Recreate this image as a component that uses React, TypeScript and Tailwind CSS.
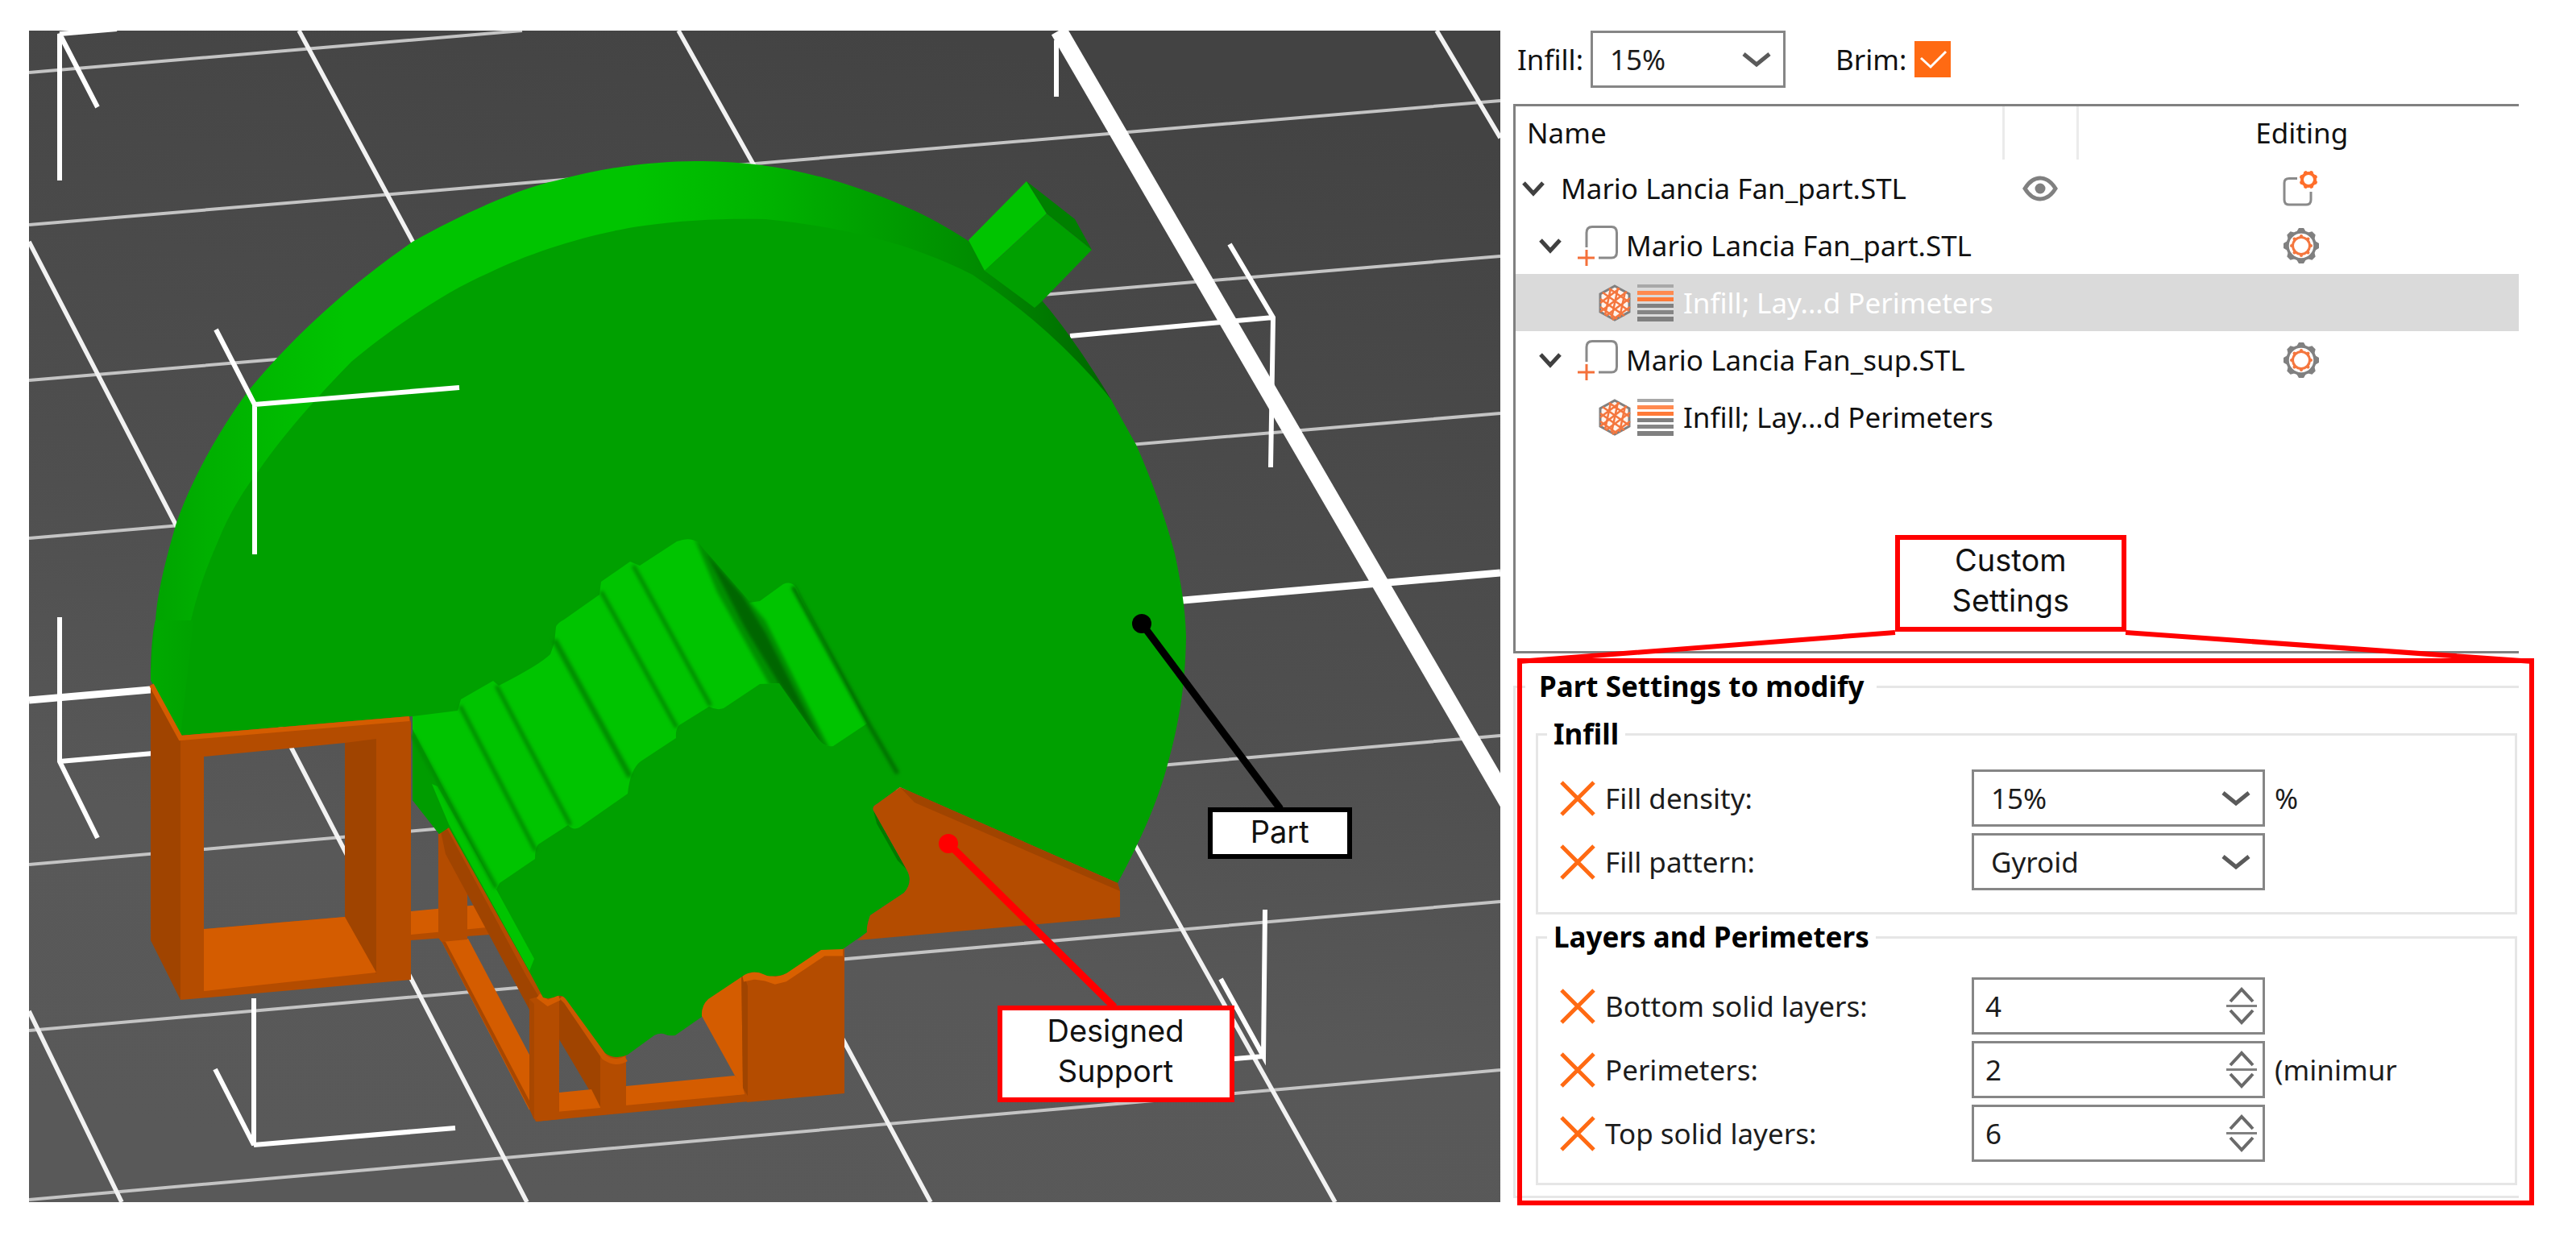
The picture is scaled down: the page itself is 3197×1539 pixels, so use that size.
import React, { useState } from "react";

const UI = "font-['Noto_Sans','Open_Sans',sans-serif]";
const NOTE = "font-[Inter,'Liberation_Sans',sans-serif]";

function Chevron({ className }: { className: string }) {
  return (
    <svg viewBox="0 0 36 20" fill="none" className={className} aria-hidden="true">
      <path d="M2 3 L18 16 L34 3" stroke="currentColor" strokeWidth="5" />
    </svg>
  );
}

function TreeChevron() {
  return (
    <svg viewBox="0 0 28 20" fill="none" className="h-5 w-7 shrink-0" aria-hidden="true">
      <path d="M2 3 L14 16 L26 3" stroke="#404040" strokeWidth="5" />
    </svg>
  );
}

function AddPartIcon() {
  return (
    <svg viewBox="0 0 50 50" fill="none" className="h-[50px] w-[50px] shrink-0" aria-hidden="true">
      <path d="M11 27 V9 Q11 1.500 18 1.500 H42 Q48.500 1.500 48.500 9 V33 Q48.500 40 42 40 H26" stroke="#8a8a8a" strokeWidth="3" />
      <path d="M0 40 H21 M11 30 V50" stroke="#f4703a" strokeWidth="3" />
    </svg>
  );
}

function InfillIcon() {
  return (
    <svg viewBox="0 0 42 46" fill="none" className="h-[46px] w-[42px] shrink-0" aria-hidden="true">
      <path d="M21 2 L39 12 V34 L21 44 L3 34 V12 Z" fill="#fff3ec" stroke="#808080" strokeWidth="3" />
      <path
        d="M14 5 L39 22 M6 10 L39 33 M3 18 L33 39 M3 28 L24 43 M27 5 L3 23 M36 9 L3 34 M40 17 L10 39 M40 28 L18 44 M16 5 L9 38 M25 4 L17 42 M34 9 L27 41"
        stroke="#f4763e"
        strokeWidth="2.500"
      />
    </svg>
  );
}

function LayersIcon() {
  return (
    <svg viewBox="0 0 45 46" className="h-[46px] w-[45px] shrink-0" aria-hidden="true">
      <rect y="0" width="45" height="4" fill="#a8a8a8" />
      <rect y="8" width="45" height="5" fill="#ff8a50" />
      <rect y="16" width="45" height="5" fill="#ff7a38" />
      <rect y="24" width="45" height="5" fill="#808080" />
      <rect y="32" width="45" height="5" fill="#858585" />
      <rect y="40" width="45" height="6" fill="#808080" />
    </svg>
  );
}

function EyeIcon() {
  return (
    <svg viewBox="0 0 44 32" fill="none" className="h-8 w-11" aria-hidden="true">
      <path d="M3 16 Q11 3 22 3 Q33 3 41 16 Q33 29 22 29 Q11 29 3 16 Z" stroke="#808080" strokeWidth="5" />
      <circle cx="22" cy="16" r="6.500" fill="#808080" />
    </svg>
  );
}

const TEETH = [0, 45, 90, 135, 180, 225, 270, 315];

function GearIcon() {
  return (
    <svg viewBox="-23 -23 46 46" fill="none" className="h-[46px] w-[46px]" aria-hidden="true">
      <circle r="17" stroke="#808080" strokeWidth="3.500" />
      {TEETH.map((a) => (
        <path key={a} d="M-6 -17 L-3 -22 H3 L6 -17 Z" fill="#808080" transform={`rotate(${a})`} />
      ))}
      <circle r="10.500" stroke="#f4763e" strokeWidth="3" />
      {TEETH.map((a) => (
        <circle key={a} cy="-12" r="2" fill="#f4763e" transform={`rotate(${a})`} />
      ))}
    </svg>
  );
}

function ObjectSettingsIcon() {
  return (
    <svg viewBox="0 0 46 46" fill="none" className="h-[46px] w-[46px]" aria-hidden="true">
      <path d="M18 10.500 H8 Q2 10.500 2 16 V37 Q2 43 8 43 H29 Q35 43 35 37 V27" stroke="#8a8a8a" strokeWidth="3" />
      <g transform="translate(32 12)">
        <circle r="8" stroke="#ff6e2a" strokeWidth="4" />
        {TEETH.map((a) => (
          <circle key={a} cy="-9" r="2.500" fill="#ff6e2a" transform={`rotate(${a + 22})`} />
        ))}
      </g>
    </svg>
  );
}

function Scene() {
  return (
    <svg viewBox="36 38 1826 1454" className="block h-full w-full" role="img" aria-label="Fan part and designed support on the print bed">
      <defs>
        <linearGradient id="bed" x1="0.600" y1="0" x2="0.350" y2="1">
          <stop offset="0" stopColor="#434343" />
          <stop offset="0.500" stopColor="#4f4f4f" />
          <stop offset="0.750" stopColor="#585858" />
          <stop offset="1" stopColor="#595959" />
        </linearGradient>
        <linearGradient id="rim" gradientUnits="userSpaceOnUse" x1="187" y1="0" x2="1390" y2="0">
          <stop offset="0" stopColor="#00a300" />
          <stop offset="0.060" stopColor="#00b000" />
          <stop offset="0.200" stopColor="#00c400" />
          <stop offset="0.500" stopColor="#00c400" />
          <stop offset="0.640" stopColor="#00b200" />
          <stop offset="0.760" stopColor="#009c00" />
          <stop offset="0.860" stopColor="#008a00" />
          <stop offset="1" stopColor="#006400" />
        </linearGradient>
        <linearGradient id="leftEdge" gradientUnits="userSpaceOnUse" x1="187" y1="0" x2="250" y2="0">
          <stop offset="0" stopColor="#00aa00" />
          <stop offset="1" stopColor="#00a000" />
        </linearGradient>
        <filter id="soft" x="-20%" y="-20%" width="140%" height="140%">
          <feGaussianBlur stdDeviation="2" />
        </filter>
        <clipPath id="blade">
          <path d="M848 670 Q858 667 866 673 L930 746 L972 725 Q986 719 992 738 L1076 898 L1034 926 Q1024 928 1016 918 L967 848 L943 849 L898 879 Z" />
        </clipPath>
      </defs>
      <rect x="36" y="38" width="1826" height="1454" fill="url(#bed)" />

      {/* bed grid */}
      <g stroke="#c4c4c4" strokeWidth="4">
        <path d="M36 90 L648 38 M36 279 L1862 125 M36 472 L1862 318 M36 668 L1862 513 M36 1073 L1862 913 M36 1279 L1862 1119 M36 1489 L1862 1328" />
      </g>
      <g stroke="#f2f2f2" strokeWidth="5.500">
        <path d="M36 1255 L151 1492 M36 300 L654 1492 M371 38 L1155 1492 M842 38 L1657 1492 M1783 38 L1862 171" />
      </g>
      <path d="M36 869 L1862 711" stroke="#fff" strokeWidth="9" />
      <path d="M1314 38 L1874 1001" stroke="#fff" strokeWidth="21" />

      {/* rear bounding-box corners */}
      <g stroke="#fff" strokeWidth="6" fill="none">
        <path d="M74 224 V42 L121 133 M74 42 L145 36" />
        <path d="M1311 50 V120" />
        <path d="M1526 303 L1580 394 L1577 580 M1580 394 L1328 417" />
        <path d="M74 766 V945 L121 1040 M74 945 L190 935" />
        <path d="M315 1239 V1421 L267 1327 M315 1421 L565 1400" />
        <path d="M1570 1129 L1568 1311 L1515 1215 M1568 1311 L1520 1315" />
      </g>

      {/* middle support frame */}
      <path d="M510 1131 L594 1123 L610 1152 L510 1162 Z" fill="#d45c00" />
      <path d="M510 1160 L605 1151 L608 1160 L510 1167 Z" fill="#b44c00" />
      <path d="M548 1168 L581 1165 L657 1309 L657 1378 Z" fill="#d45c00" />
      <path d="M547 1166 L553 1169 L658 1368 L657 1376 Z" fill="#a84700" />
      <path d="M544 1018 L580 1070 V1166 L548 1169 L544 1164 Z" fill="#b44c00" />
      <path d="M544 1018 L557 1020 L665 1200 L690 1238 L657 1253 L580 1110 L553 1060 Z" fill="#a04400" />
      <path d="M547 1020 L558 1028 L656 1210 L674 1240" stroke="#b44c00" strokeWidth="6" fill="none" />
      <path d="M694 1230 L703 1241 L760 1310 L745 1376 L694 1290 Z" fill="#a04400" />
      <path d="M694 1356 L734 1352 L746 1376 L694 1381 Z" fill="#d45c00" />
      <path d="M777 1348 L912 1335 L930 1358 L777 1374 Z" fill="#d45c00" />
      <path d="M690 1380 L927 1358 L950 1365 L665 1392 Z" fill="#b44c00" />
      <path d="M657 1240 L694 1230 V1389 L665 1392 L657 1376 Z" fill="#b44c00" />
      <path d="M657 1240 L663 1246 V1390 L657 1376 Z" fill="#a84700" />
      <path d="M668 1236 L680 1245 L694 1238" stroke="#d45c00" strokeWidth="7" fill="none" />
      <path d="M745 1306 H777 V1380 L745 1384 Z" fill="#b44c00" />
      <path d="M697 1237 L703 1243 L750 1312 Q764 1322 777 1314" stroke="#cc5800" strokeWidth="7" fill="none" />
      <path d="M871 1240 L924 1200 V1353 L912 1335 L871 1261 Z" fill="#d45c00" />
      <path d="M920 1200 L1048 1170 V1357 L927 1368 L922 1350 Z" fill="#b44c00" />
      <path d="M920 1200 L928 1224 V1360 L922 1350 Z" fill="#a04400" />
      <path d="M922 1214 L936 1211 L950 1213 L962 1217 L974 1214 L1022 1182 L1046 1182" stroke="#d96000" strokeWidth="9" fill="none" />

      {/* disc rim */}
      <path
        d="M187 844 C187 800 191 775 193 770 C195 735 207 690 218 652 C233 606 267 540 309 484 C370 410 440 350 512 300 C580 262 650 232 691 224 C750 207 820 199 872 200 C960 201 1040 219 1134 261 C1200 292 1260 338 1294 374 C1318 402 1350 447 1379 496 L1330 560 H700 L300 900 L224 913 Z"
        fill="url(#rim)"
      />
      {/* disc face */}
      <path
        d="M224 913 C228 860 232 815 237 770 C245 735 256 705 270 673 C285 635 305 605 321 584 C350 542 391 495 436 449 C480 412 550 363 606 339 C660 312 740 288 800 280 C850 273 900 271 950 272 C1000 277 1040 284 1085 295 C1130 307 1170 322 1207 341 C1250 370 1285 398 1310 422 C1335 445 1360 472 1379 496 C1391 518 1400 534 1410 552 C1425 585 1446 640 1458 687 C1466 725 1471 755 1472 790 C1471 850 1464 895 1449 949 C1438 990 1420 1035 1387 1096 L1117 977 L1088 998 Q1082 1001 1084 1006 L1125 1079 Q1134 1094 1122 1108 L1080 1136 Q1075 1150 1076 1157 L1046 1178 L1019 1179 L976 1208 Q966 1213 952 1211 L942 1207 Q932 1205 924 1210 L879 1240 Q870 1248 871 1262 L838 1285 Q830 1286 826 1284 Q820 1281 812 1285 L779 1309 Q764 1316 751 1307 L703 1241 Q699 1235 692 1236 Q682 1241 674 1238 L657 1206 L557 1027 L545 1035 L512 993 V889 Z"
        fill="#00a000"
      />
      <path d="M187 844 L193 770 L240 770 L224 913 Z" fill="url(#leftEdge)" />

      {/* tab on the rim */}
      <path d="M1274 225 L1202 298 L1222 336 L1299 265 Z" fill="#00c400" />
      <path d="M1299 265 L1355 310 L1293 374 L1284 382 L1222 336 Z" fill="#00a000" />
      <path d="M1274 225 L1334 272 L1355 310 L1299 265 Z" fill="#008000" />

      {/* stepped blades */}
      <path
        d="M512 889 L568 882 L572 868 L612 845 L619 851 Q670 825 683 812 L688 798 L690 778 Q692 773 700 769 L744 738 L746 722 L782 697 L794 702 L840 672 Q856 666 866 673 L967 848 L943 849 L898 879 Q890 882 880 877 L843 900 Q838 905 839 916 L795 945 Q782 955 779 985 L719 1027 Q711 1031 705 1024 L668 1048 Q664 1052 664 1066 L620 1096 L616 1104 L512 905 Z"
        fill="#00c400"
      />
      <path d="M512 905 L538 970 L557 1022 L557 1027 L545 1035 L512 993 Z" fill="#009c00" />
      <path d="M536 973 L543 976 L616 1104 L663 1190 L657 1205 L557 1023 Z" fill="#00c400" />
      <path d="M930 748 L943 746 L972 725 Q986 719 992 738 L1076 898 L1034 926 Q1024 928 1016 918 L930 762 Z" fill="#00c400" />
      <g clipPath="url(#blade)">
        <path d="M860 664 L950 770 L1040 950 L1000 910 L955 850 L890 735 Z" fill="#009000" filter="url(#soft)" />
        <path d="M876 686 L922 740 L950 785 L1022 926 L968 850 L925 780 Z" fill="#006600" filter="url(#soft)" />
      </g>
      <g filter="url(#soft)" fill="none" stroke="#008c00">
        <path d="M571 876 L665 1056" strokeWidth="5" />
        <path d="M616 851 L708 1024" strokeWidth="5" />
        <path d="M688 794 L782 964" strokeWidth="7" />
        <path d="M746 734 L840 903" strokeWidth="5" />
        <path d="M786 702 L882 876" strokeWidth="5" />
        <path d="M512 912 L616 1102" strokeWidth="5" />
        <path d="M984 728 L1080 902 L1114 960" strokeWidth="5" stroke="#006c00" />
      </g>
      <path d="M1084 1006 L1125 1079 L1114 1068 L1088 1022 Z" fill="#007a00" />

      {/* wedge support */}
      <path
        d="M1117 977 L1387 1096 L1390 1106 V1138 L1064 1167 L1076 1157 Q1075 1150 1080 1136 L1122 1108 Q1134 1094 1125 1079 L1084 1006 Q1082 1001 1088 998 Z"
        fill="#b44c00"
      />
      <path d="M1117 977 L1387 1096 L1390 1106 L1135 996 Z" fill="#a04400" />

      {/* left support frame */}
      <path
        fillRule="evenodd"
        d="M224 913 L508 889 L510 897 V1216 L224 1241 Z M253 939 L428 922 V1138 L253 1153 Z"
        fill="#b44c00"
      />
      <path d="M187 848 L224 913 V1241 L187 1167 Z" fill="#a04400" />
      <path d="M428 922 L467 917 V1209 L428 1138 Z" fill="#a04400" />
      <path d="M253 1153 L428 1138 L467 1207 L253 1230 Z" fill="#d45c00" />
      <path d="M188 850 L224 916 L508 892" stroke="#d45c00" strokeWidth="6" fill="none" />

      {/* front bounding-box corner */}
      <path d="M268 409 L316 502 V688 M316 502 L570 481" stroke="#fff" strokeWidth="6" fill="none" />

      {/* leaders */}
      <path d="M1417 774 L1589 1004" stroke="#000" strokeWidth="9" />
      <circle cx="1417" cy="774" r="12" fill="#000" />
      <path d="M1177 1047 L1383 1250" stroke="#f00" strokeWidth="9" />
      <circle cx="1177" cy="1047" r="12" fill="#f00" />
    </svg>
  );
}

function Dropdown({ id, options, label, className, pad }: { id: string; options: string[]; label?: string; className: string; pad: string }) {
  return (
    <div className={`relative ${className}`}>
      <select
        id={id}
        aria-label={label}
        className={`h-[71px] w-full appearance-none border-3 border-[#868686] bg-white text-[#1c1c1c] outline-none ${pad}`}
      >
        {options.map((o) => (
          <option key={o}>{o}</option>
        ))}
      </select>
      <Chevron className="pointer-events-none absolute top-[26px] right-[18px] h-5 w-9 text-[#5a5a5a]" />
    </div>
  );
}

function SpinBox({ id, initial }: { id: string; initial: number }) {
  const [value, setValue] = useState(initial);
  return (
    <div className="flex h-[71px] border-3 border-[#868686] bg-white">
      <input
        id={id}
        inputMode="numeric"
        value={value}
        onChange={(e) => setValue(Number(e.target.value) || 0)}
        className="w-0 flex-1 bg-transparent pl-[14px] text-[#1c1c1c] outline-none"
      />
      <div className="flex w-[52px] flex-col items-center justify-center">
        <button type="button" aria-label="Increase" onClick={() => setValue(value + 1)} className="flex h-6 w-[38px] items-center justify-center">
          <svg viewBox="0 0 32 20" fill="none" className="h-5 w-8">
            <path d="M2 18 L16 3 L30 18" stroke="#6a6a6a" strokeWidth="4" />
          </svg>
        </button>
        <span className="h-[3px] w-[38px] bg-[#808080]" />
        <button type="button" aria-label="Decrease" onClick={() => setValue(value - 1)} className="flex h-6 w-[38px] items-center justify-center">
          <svg viewBox="0 0 32 20" fill="none" className="h-5 w-8">
            <path d="M2 2 L16 17 L30 2" stroke="#6a6a6a" strokeWidth="4" />
          </svg>
        </button>
      </div>
    </div>
  );
}

function SettingRow({ id, label, unit, children }: { id: string; label: string; unit?: string; children: React.ReactNode }) {
  return (
    <div className="grid h-[71px] grid-cols-[56px_455px_364px_1fr] items-center">
      <button type="button" aria-label={`Remove ${label}`} className="h-11 w-11">
        <svg viewBox="0 0 44 44" className="h-11 w-11">
          <path d="M2 2 L42 42 M42 2 L2 42" stroke="#ff6a13" strokeWidth="5" />
        </svg>
      </button>
      <label htmlFor={id} className="text-[#1c1c1c]">
        {label}
      </label>
      {children}
      <span className="pl-3 text-[#1c1c1c]">{unit}</span>
    </div>
  );
}

const GROUP = "border-3 border-[#e6e6e6] pl-[27px]";
const LEGEND = "-ml-4 pr-2 pl-[8px] font-bold leading-[48px]";

function TreeRow({ kind, name, selected }: { kind: "object" | "part" | "settings"; name: string; selected?: boolean }) {
  return (
    <tr className={selected ? "h-[71px] bg-[#dadada] text-white" : "h-[71px]"}>
      <td className="p-0">
        {kind === "object" && (
          <div className="flex items-center gap-5 pl-2">
            <TreeChevron />
            <span>{name}</span>
          </div>
        )}
        {kind === "part" && (
          <div className="flex items-center pl-[29px]">
            <TreeChevron />
            <span className="pr-[10px] pl-5">
              <AddPartIcon />
            </span>
            <span>{name}</span>
          </div>
        )}
        {kind === "settings" && (
          <div className="flex items-center pl-[102px]">
            <InfillIcon />
            <span className="pr-3 pl-[7px]">
              <LayersIcon />
            </span>
            <span>{name}</span>
          </div>
        )}
      </td>
      <td className="p-0">
        {kind === "object" && (
          <button type="button" aria-label="Toggle visibility" className="mx-auto block">
            <EyeIcon />
          </button>
        )}
      </td>
      <td className="p-0 pl-2">
        {kind !== "settings" && (
          <button type="button" aria-label={`Edit ${name}`} className="mx-auto block">
            {kind === "object" ? <ObjectSettingsIcon /> : <GearIcon />}
          </button>
        )}
      </td>
    </tr>
  );
}

export default function App() {
  return (
    <main className={`flex items-start gap-4 bg-white pt-[38px] pr-[52px] pb-10 pl-9 text-[35px] leading-[48px] text-[#111111] ${UI}`}>
      <section className="relative aspect-[1826/1454] min-w-0 flex-[1826_1_0%]">
        <Scene />
        <div className={`absolute top-[66.3%] left-[80.1%] flex h-[64px] w-[179px] items-start justify-center border-[6px] border-black bg-white text-[38px] leading-[48px] ${NOTE}`}>
          Part
        </div>
        <div className={`absolute top-[83.2%] left-[65.8%] h-[120px] w-[294px] border-[6px] border-[#ff0000] bg-white text-center text-[38px] leading-[50px] ${NOTE}`}>
          Designed
          <br />
          Support
        </div>
      </section>

      <section className="min-w-0 flex-[1267_1_0%]">
        <div className="flex items-center pl-[5px]">
          <label htmlFor="infill" className="w-[91px]">
            Infill:
          </label>
          <Dropdown id="infill" options={["15%", "20%", "25%"]} className="w-[242px]" pad="pl-[21px]" />
          <label htmlFor="brim" className="ml-[62px] w-[98px]">
            Brim:
          </label>
          <span className="relative block h-[45px] w-[45px]">
            <input id="brim" type="checkbox" defaultChecked className="peer block h-[45px] w-[45px] appearance-none bg-white outline outline-[#868686] checked:bg-[#ff6a13] checked:outline-none" />
            <svg viewBox="0 0 45 45" fill="none" className="pointer-events-none absolute inset-0 hidden peer-checked:block">
              <path d="M8 21 L20 32 L39 13" stroke="#fff" strokeWidth="3" />
            </svg>
          </span>
        </div>

        <div className="mt-5 mr-[19px] min-h-[682px] border-y-3 border-l-3 border-[#808080]">
          <table className="w-full table-fixed border-collapse">
            <colgroup>
              <col />
              <col className="w-[92px]" />
              <col className="w-[548px]" />
            </colgroup>
            <thead>
              <tr className="h-[66px]">
                <th className="border-r-3 border-[#ebebeb] p-0 pl-[14px] text-left font-normal">Name</th>
                <th className="border-r-3 border-[#ebebeb] p-0" aria-label="Visibility" />
                <th className="p-0 pl-2 text-center font-normal">Editing</th>
              </tr>
            </thead>
            <tbody>
              <TreeRow kind="object" name="Mario Lancia Fan_part.STL" />
              <TreeRow kind="part" name="Mario Lancia Fan_part.STL" />
              <TreeRow kind="settings" name="Infill; Lay...d Perimeters" selected />
              <TreeRow kind="part" name="Mario Lancia Fan_sup.STL" />
              <TreeRow kind="settings" name="Infill; Lay...d Perimeters" />
            </tbody>
          </table>
        </div>

        <div className="relative pt-[17px]">
          <fieldset className="mr-[19px] border-y-3 border-l-3 border-[#e6e6e6] pt-[11px] pr-[2px] pb-[13px] pl-[25px] text-black">
            <legend className="-ml-[13px] pr-4 pl-[17px] font-bold">Part Settings to modify</legend>
            <fieldset className={`${GROUP} pt-5 pb-[27px]`}>
              <legend className={LEGEND}>Infill</legend>
              <div className="flex flex-col gap-2">
                <SettingRow id="density" label="Fill density:" unit="%">
                  <Dropdown id="density" options={["15%", "20%", "25%"]} className="w-full" pad="pl-[21px]" />
                </SettingRow>
                <SettingRow id="pattern" label="Fill pattern:">
                  <Dropdown id="pattern" options={["Gyroid", "Grid", "Honeycomb"]} className="w-full" pad="pl-[21px]" />
                </SettingRow>
              </div>
            </fieldset>
            <fieldset className={`${GROUP} mt-1 pt-[26px] pb-[26px]`}>
              <legend className={LEGEND}>Layers and Perimeters</legend>
              <div className="flex flex-col gap-2">
                <SettingRow id="bottom" label="Bottom solid layers:">
                  <SpinBox id="bottom" initial={4} />
                </SettingRow>
                <SettingRow id="perimeters" label="Perimeters:" unit="(minimur">
                  <SpinBox id="perimeters" initial={2} />
                </SettingRow>
                <SettingRow id="top" label="Top solid layers:">
                  <SpinBox id="top" initial={6} />
                </SettingRow>
              </div>
            </fieldset>
          </fieldset>

          {/* annotation frame, its leader lines and its caption */}
          <div className="pointer-events-none absolute top-[6px] right-0 -bottom-[9px] left-[5px] border-[6px] border-[#ff0000]">
            <svg viewBox="0 0 1262 42" preserveAspectRatio="none" fill="none" className="absolute -top-[41px] -left-[6px] h-[42px] w-[calc(100%+12px)]">
              <path d="M2 39 L469 3 M1260 39 L755 3" stroke="#f00" strokeWidth="6" />
            </svg>
            <div className={`absolute -top-[159px] left-[37%] h-[120px] w-[23%] border-[6px] border-[#ff0000] bg-white text-center text-[38px] leading-[50px] text-[#111111] ${NOTE}`}>
              Custom
              <br />
              Settings
            </div>
          </div>
        </div>
      </section>
    </main>
  );
}
